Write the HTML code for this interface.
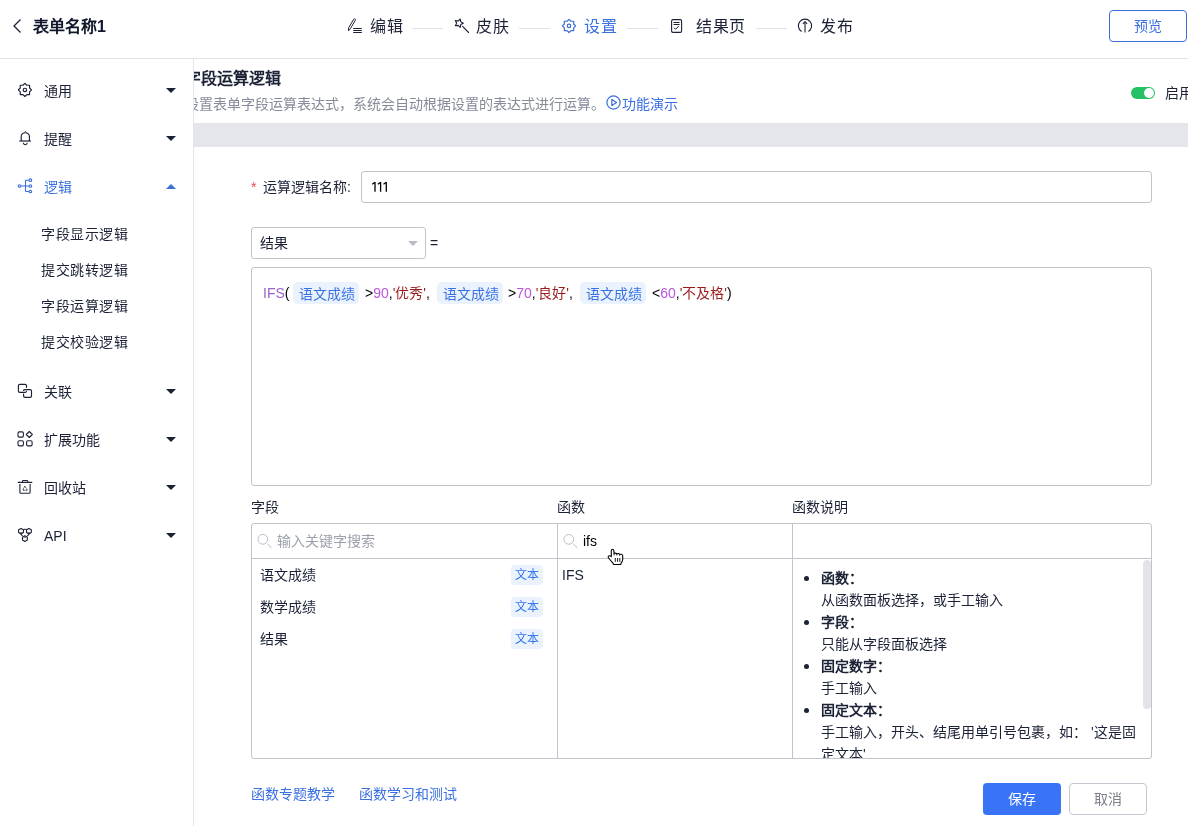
<!DOCTYPE html>
<html lang="zh-CN"><head><meta charset="utf-8">
<style>
*{box-sizing:border-box;margin:0;padding:0}
html,body{width:1188px;height:826px;overflow:hidden;background:#fff;font-family:"Liberation Sans",sans-serif;color:#1b2236}
.a{position:absolute;white-space:nowrap;will-change:transform}
.hdr{position:absolute;left:0;top:0;width:1188px;height:59px;border-bottom:1px solid #e1e2e7;background:#fff}
.t16{font-size:16px;line-height:20px}
.t14{font-size:14px;line-height:18px}
.t13{font-size:13px;line-height:18px}
.blue{color:#3a70e0}
.line{position:absolute;height:1px;background:#dfe2e8;width:31px;top:28px}
.side{position:absolute;left:0;top:59px;width:194px;height:767px;background:#fff;border-right:1px solid #e4e5ea}
.caret{position:absolute;width:0;height:0;border-left:5px solid transparent;border-right:5px solid transparent;border-top:5px solid #1b2236}
.caretup{position:absolute;width:0;height:0;border-left:5px solid transparent;border-right:5px solid transparent;border-bottom:5px solid #3a6fd8}
.box{position:absolute;border:1px solid #c2c3cb;border-radius:3px;background:#fff}
.tag{position:absolute;background:#e9f1fd;color:#3a6fd8;border-radius:4px;font-size:14px;line-height:22px;height:22px;padding:0 6px}
.tg{display:inline-block;background:#e9f1fd;color:#3a6fd8;border-radius:4px;line-height:22px;padding:0 5px;margin:0 1px}
.tgx{position:absolute;will-change:transform;top:282px;height:22px;width:66px;background:#eaf2fe;color:#3a72e2;border-radius:5px;font-size:14px;line-height:22px;padding-left:6px;padding-top:1px}
.tag2{position:absolute;will-change:transform;background:#eaf2fe;color:#3876ec;border-radius:4px;font-size:12px;line-height:20px;height:20px;width:32px;text-align:center}
li{position:relative}
li::before{content:"";position:absolute;left:-17px;top:8.5px;width:5px;height:5px;border-radius:50%;background:#1b2236}
.fx{color:#9a64c8}
.num{color:#bb55dd}
.str{color:#9c1c1c}
</style></head><body>

<!-- header -->
<div class="hdr"></div>
<svg class="a" style="left:12px;top:18px" width="10" height="16" viewBox="0 0 10 16"><path d="M8.5 1.5 L2 8 L8.5 14.5" fill="none" stroke="#1b2236" stroke-width="1.3"/></svg>
<div class="a t16" style="left:33px;top:17px;font-weight:bold;color:#0f172a">表单名称1</div>

<!-- steps -->
<svg class="a" style="left:344px;top:15px" width="22" height="22" viewBox="0 0 22 22"><path d="M4.4 15.8 L4.7 12.7 L9.7 4.2 Q10.4 3.4 11.2 4.0 Q11.8 4.6 11.3 5.3 L6.3 13.8 Z" fill="none" stroke="#1b2236" stroke-width="1" stroke-linejoin="round"/><path d="M9.2 13.5 H17.8 M9.2 15.5 H17.8 M9.2 17.5 H17.8" stroke="#1b2236" stroke-width="1.05"/></svg>
<div class="a t16" style="left:370px;top:17px;letter-spacing:0.5px">编辑</div>
<div class="line" style="left:412px"></div>
<svg class="a" style="left:451px;top:15px" width="22" height="22" viewBox="0 0 22 22"><path d="M9.26 4.02 L9.76 6.85 L12.30 8.20 L9.76 9.55 L9.26 12.38 L7.19 10.39 L4.34 10.79 L5.60 8.20 L4.34 5.61 L7.19 6.01 Z" fill="none" stroke="#1b2236" stroke-width="1.1" stroke-linejoin="round"/><path d="M11.6 11.4 L17.6 17.5" stroke="#1b2236" stroke-width="1.1" stroke-linecap="round"/></svg>
<div class="a t16" style="left:476px;top:17px;letter-spacing:0.5px">皮肤</div>
<div class="line" style="left:519px"></div>
<svg class="a" style="left:558px;top:15px" width="22" height="22" viewBox="0 0 22 22"><path d="M11.00 4.30 L12.93 6.23 L15.67 6.23 L15.67 8.97 L17.60 10.90 L15.67 12.83 L15.67 15.57 L12.93 15.57 L11.00 17.50 L9.07 15.57 L6.33 15.57 L6.33 12.83 L4.40 10.90 L6.33 8.97 L6.33 6.23 L9.07 6.23 Z" fill="none" stroke="#3a6fd8" stroke-width="1.2" stroke-linejoin="round"/><circle cx="11" cy="10.9" r="1.7" fill="none" stroke="#3a6fd8" stroke-width="1.2"/></svg>
<div class="a t16 blue" style="left:584px;top:17px;letter-spacing:0.5px">设置</div>
<div class="line" style="left:627px"></div>
<svg class="a" style="left:666px;top:15px" width="22" height="22" viewBox="0 0 22 22"><rect x="5.6" y="4.6" width="10" height="12.8" rx="1.3" fill="none" stroke="#1b2236" stroke-width="1.1"/><path d="M7.5 7.5 H13.6 M7.5 9.5 H13.6" stroke="#1b2236" stroke-width="1"/><path d="M8.4 13 L9.6 14.3 L12.5 11.3" fill="none" stroke="#1b2236" stroke-width="1" stroke-linecap="round" stroke-linejoin="round"/></svg>
<div class="a t16" style="left:696px;top:17px;letter-spacing:0.5px">结果页</div>
<div class="line" style="left:756px"></div>
<svg class="a" style="left:794px;top:15px" width="22" height="22" viewBox="0 0 22 22"><path d="M7.3 16.2 A6.6 6.6 0 1 1 14.7 16.2" fill="none" stroke="#1b2236" stroke-width="1.1" stroke-linecap="round"/><path d="M11 7 V17.6" stroke="#1b2236" stroke-width="1.1"/><path d="M8.9 8.8 L11 6.6 L13.1 8.8" fill="none" stroke="#1b2236" stroke-width="1.1" stroke-linejoin="round"/></svg>
<div class="a t16" style="left:820px;top:17px;letter-spacing:0.5px">发布</div>

<div class="a" style="left:1109px;top:10px;width:78px;height:32px;border:1px solid #3d6dd6;border-radius:4px;"></div>
<div class="a t14 blue" style="left:1134px;top:17px">预览</div>

<!-- sidebar -->
<div style="position:absolute;left:0;top:0;width:0;height:0;z-index:5">
<div class="side"></div>
<svg class="a" style="left:14px;top:80px" width="22" height="22" viewBox="0 0 22 22"><path d="M10.90 3.30 L12.83 5.23 L15.57 5.23 L15.57 7.97 L17.50 9.90 L15.57 11.83 L15.57 14.57 L12.83 14.57 L10.90 16.50 L8.97 14.57 L6.23 14.57 L6.23 11.83 L4.30 9.90 L6.23 7.97 L6.23 5.23 L8.97 5.23 Z" fill="none" stroke="#1b2236" stroke-width="1.15" stroke-linejoin="round"/><circle cx="10.9" cy="9.9" r="1.7" fill="none" stroke="#1b2236" stroke-width="1.15"/></svg>
<div class="a t14" style="left:44px;top:82px">通用</div>
<div class="caret" style="left:166px;top:88px"></div>
<svg class="a" style="left:14px;top:128px" width="22" height="22" viewBox="0 0 22 22"><path d="M7.2 12.9 V8 A4.2 4.2 0 0 1 15.4 8 V12.9" fill="none" stroke="#1b2236" stroke-width="1.15"/><path d="M11.3 3.3 V3.9" stroke="#1b2236" stroke-width="1.1"/><path d="M5.3 13 H16.9" stroke="#1b2236" stroke-width="1.2"/><path d="M9.4 14.8 A1.9 1.9 0 0 0 13.2 14.8" fill="none" stroke="#1b2236" stroke-width="1.1"/></svg>
<div class="a t14" style="left:44px;top:130px">提醒</div>
<div class="caret" style="left:166px;top:136px"></div>
<svg class="a" style="left:14px;top:176px" width="22" height="22" viewBox="0 0 22 22"><path d="M6.7 10 H15.2 M11.5 4.2 V15.5 M11.5 4.2 H15.2 M11.5 15.5 H15.2" fill="none" stroke="#3a6fd8" stroke-width="1.1"/><circle cx="5.5" cy="10" r="1.3" fill="#fff" stroke="#3a6fd8" stroke-width="1.1"/><circle cx="16.4" cy="4.2" r="1.3" fill="#fff" stroke="#3a6fd8" stroke-width="1.1"/><circle cx="16.4" cy="10" r="1.3" fill="#fff" stroke="#3a6fd8" stroke-width="1.1"/><circle cx="16.4" cy="15.5" r="1.3" fill="#fff" stroke="#3a6fd8" stroke-width="1.1"/></svg>
<div class="a t14 blue" style="left:44px;top:178px">逻辑</div>
<div class="caretup" style="left:166px;top:184px"></div>
<div class="a t14" style="left:41px;top:225px;letter-spacing:0.5px">字段显示逻辑</div>
<div class="a t14" style="left:41px;top:261px;letter-spacing:0.5px">提交跳转逻辑</div>
<div class="a t14" style="left:41px;top:297px;letter-spacing:0.5px">字段运算逻辑</div>
<div class="a t14" style="left:41px;top:333px;letter-spacing:0.5px">提交校验逻辑</div>
<svg class="a" style="left:14px;top:380px" width="22" height="22" viewBox="0 0 22 22"><path d="M12.5 7.3 V5.8 Q12.5 4.4 11.1 4.4 H5.8 Q4.4 4.4 4.4 5.8 V11 Q4.4 12.4 5.8 12.4 H11.1 Q12.5 12.4 12.5 11.3" fill="none" stroke="#1b2236" stroke-width="1.15" stroke-linecap="round"/><path d="M9.6 10.4 Q9.6 9.6 11 9.6 H16.1 Q17.5 9.6 17.5 11 V16 Q17.5 17.4 16.1 17.4 H11 Q9.6 17.4 9.6 16 V14" fill="none" stroke="#1b2236" stroke-width="1.15" stroke-linecap="round"/></svg>
<div class="a t14" style="left:44px;top:383px">关联</div>
<div class="caret" style="left:166px;top:389px"></div>
<svg class="a" style="left:14px;top:428px" width="22" height="22" viewBox="0 0 22 22"><rect x="4.0" y="3.9" width="5.4" height="5.2" rx="1.3" fill="none" stroke="#1b2236" stroke-width="1.1"/><rect x="4.0" y="12.7" width="5.4" height="5.2" rx="1.3" fill="none" stroke="#1b2236" stroke-width="1.1"/><rect x="12.6" y="12.7" width="5.5" height="5.2" rx="1.3" fill="none" stroke="#1b2236" stroke-width="1.1"/><path d="M15.3 3.5 L18.3 6.5 L15.3 9.5 L12.3 6.5 Z" fill="none" stroke="#1b2236" stroke-width="1.1" stroke-linejoin="round"/></svg>
<div class="a t14" style="left:44px;top:431px">扩展功能</div>
<div class="caret" style="left:166px;top:437px"></div>
<svg class="a" style="left:14px;top:476px" width="22" height="22" viewBox="0 0 22 22"><path d="M4.2 6.4 H17.8" stroke="#1b2236" stroke-width="1.1" stroke-linecap="round"/><path d="M8.5 6.4 V4.5 H13.7 V6.4" fill="none" stroke="#1b2236" stroke-width="1"/><path d="M5.9 8 V16.2 Q5.9 17.3 7 17.3 H15 Q16.1 17.3 16.1 16.2 V8" fill="none" stroke="#1b2236" stroke-width="1.1"/><path d="M10.8 10.2 L8.6 14.2 H13.6 Z" fill="none" stroke="#1b2236" stroke-width="1" stroke-dasharray="1.6 0.9"/></svg>
<div class="a t14" style="left:44px;top:479px">回收站</div>
<div class="caret" style="left:166px;top:485px"></div>
<svg class="a" style="left:14px;top:524px" width="22" height="22" viewBox="0 0 22 22"><path d="M7.00 4.40 L9.42 5.80 L9.42 8.60 L7.00 10.00 L4.58 8.60 L4.58 5.80 Z" fill="none" stroke="#1b2236" stroke-width="1.1" stroke-linejoin="round"/><path d="M14.90 4.40 L17.32 5.80 L17.32 8.60 L14.90 10.00 L12.48 8.60 L12.48 5.80 Z" fill="none" stroke="#1b2236" stroke-width="1.1" stroke-linejoin="round"/><path d="M10.90 11.80 L13.32 13.20 L13.32 16.00 L10.90 17.40 L8.48 16.00 L8.48 13.20 Z" fill="none" stroke="#1b2236" stroke-width="1.1" stroke-linejoin="round"/><path d="M9.4 5.6 Q11 5.0 12.5 5.6 M6.8 10 L8.5 12.2 M15 10 L13.3 12.2" fill="none" stroke="#1b2236" stroke-width="1.1"/><path d="M6 8.2 A1.3 1.3 0 0 0 8.2 8.2 M13.7 8.2 A1.3 1.3 0 0 0 15.9 8.2 M9.8 13.8 A1.3 1.3 0 0 1 12 13.8" fill="none" stroke="#1b2236" stroke-width="0.9"/></svg>
<div class="a t14" style="left:44px;top:527px">API</div>
<div class="caret" style="left:166px;top:533px"></div>
</div>

<!-- main -->
<div class="a" style="left:185px;top:69px;font-size:16px;line-height:20px;font-weight:bold">字段运算逻辑</div>
<div class="a t14" style="left:185px;top:95px;color:#858b98">设置表单字段运算表达式，系统会自动根据设置的表达式进行运算。</div>
<svg class="a" style="left:606px;top:95px" width="15" height="15" viewBox="0 0 15 15"><circle cx="7.5" cy="7.5" r="6.6" fill="none" stroke="#3a6fd8" stroke-width="1.2"/><path d="M5.8 4.5 L10.5 7.5 L5.8 10.5 Z" fill="none" stroke="#3a6fd8" stroke-width="1.2" stroke-linejoin="round"/></svg>
<div class="a t14 blue" style="left:622px;top:95px">功能演示</div>
<div class="a" style="left:1131px;top:87px;width:24px;height:12px;border-radius:6px;background:#23c163"></div>
<div class="a" style="left:1144px;top:88px;width:10px;height:10px;border-radius:5px;background:#fff"></div>
<div class="a t14" style="left:1165px;top:84px">启用</div>
<div class="a" style="left:194px;top:123px;width:994px;height:24px;background:#e5e6eb"></div>

<!-- form -->
<div class="a t14" style="left:251px;top:178px;color:#e5484d">*</div>
<div class="a t14" style="left:263px;top:178px">运算逻辑名称:</div>
<div class="box" style="left:361px;top:171px;width:791px;height:32px"></div>
<svg class="a" style="left:0;top:0" width="400" height="200" viewBox="0 0 400 200"><path d="M375.0 182 V191.8 M375.0 182.3 L372.2 184.2" fill="none" stroke="#000" stroke-width="1.3"/><path d="M380.6 182 V191.8 M380.6 182.3 L377.8 184.2" fill="none" stroke="#000" stroke-width="1.3"/><path d="M386.3 182 V191.8 M386.3 182.3 L383.5 184.2" fill="none" stroke="#000" stroke-width="1.3"/></svg>

<div class="box" style="left:251px;top:227px;width:175px;height:32px"></div>
<div class="a t14" style="left:260px;top:234px">结果</div>
<div class="a" style="left:408px;top:241px;width:0;height:0;border-left:5px solid transparent;border-right:5px solid transparent;border-top:5px solid #b8bcc6"></div>
<div class="a t14" style="left:430px;top:234px">=</div>

<div class="box" style="left:251px;top:267px;width:901px;height:219px"></div>
<div class="a t14" style="left:263px;top:284px;color:#000"><span class="fx">IFS</span>(</div>
<div class="tgx" style="left:293px">语文成绩</div>
<div class="a t14" style="left:365px;top:284px;color:#000">&gt;<span class="num">90</span>,<span class="str">'优秀'</span>,</div>
<div class="tgx" style="left:437px">语文成绩</div>
<div class="a t14" style="left:508px;top:284px;color:#000">&gt;<span class="num">70</span>,<span class="str">'良好'</span>,</div>
<div class="tgx" style="left:580px">语文成绩</div>
<div class="a t14" style="left:652px;top:284px;color:#000">&lt;<span class="num">60</span>,<span class="str">'不及格'</span>)</div>

<!-- panel -->
<div class="a t14" style="left:251px;top:498px">字段</div>
<div class="a t14" style="left:557px;top:498px">函数</div>
<div class="a t14" style="left:792px;top:498px">函数说明</div>
<div class="box" style="left:251px;top:523px;width:901px;height:236px"></div>
<div class="a" style="left:252px;top:558px;width:899px;height:1px;background:#c2c3cb"></div>
<div class="a" style="left:557px;top:524px;width:1px;height:234px;background:#c2c3cb"></div>
<div class="a" style="left:792px;top:524px;width:1px;height:234px;background:#c2c3cb"></div>

<svg class="a" style="left:257px;top:534px" width="16" height="16" viewBox="0 0 16 16"><circle cx="5.8" cy="5.3" r="4.9" fill="none" stroke="#b9bdc6" stroke-width="1"/><path d="M10.5 10.1 L14.2 13.6" stroke="#b9bdc6" stroke-width="1" stroke-linecap="round"/></svg>
<div class="a t14" style="left:277px;top:532px;color:#9ca1ab">输入关键字搜索</div>
<svg class="a" style="left:563px;top:534px" width="16" height="16" viewBox="0 0 16 16"><circle cx="5.8" cy="5.3" r="4.9" fill="none" stroke="#b9bdc6" stroke-width="1"/><path d="M10.5 10.1 L14.2 13.6" stroke="#b9bdc6" stroke-width="1" stroke-linecap="round"/></svg>
<div class="a t14" style="left:583px;top:532px;color:#000">ifs</div>

<div class="a t14" style="left:260px;top:566px">语文成绩</div>
<div class="a t14" style="left:260px;top:598px">数学成绩</div>
<div class="a t14" style="left:260px;top:630px">结果</div>
<div class="tag2" style="left:511px;top:565px">文本</div>
<div class="tag2" style="left:511px;top:597px">文本</div>
<div class="tag2" style="left:511px;top:629px">文本</div>
<div class="a t14" style="left:562px;top:566px">IFS</div>
<svg class="a" style="left:600px;top:542px;z-index:3" width="32" height="30" viewBox="0 0 32 30"><path d="M11.3 14.6 L11.3 8.4 Q11.3 7.2 12.5 7.2 Q13.7 7.2 13.8 8.4 L14.1 11.6 Q14.3 11.0 15.3 11.1 Q16.5 11.2 16.8 12.0 Q17.2 11.4 18.3 11.5 Q19.4 11.7 19.6 12.5 Q20.0 12.1 21.2 12.2 Q22.7 12.4 22.7 13.8 L22.7 17.5 Q22.5 19.5 21.0 21.3 L20.7 22.5 L13.6 22.5 L13.0 21.2 Q10.5 18.5 8.6 16.0 Q7.7 14.6 8.8 13.9 Q9.9 13.3 11.3 14.6 Z" fill="#fff" stroke="#000" stroke-width="1.1" stroke-linejoin="round"/><path d="M15.3 16 V19.8 M17.6 16 V19.8 M19.8 16 V19.8" stroke="#000" stroke-width="0.9"/><path d="M14.1 11.8 V13.4 M16.8 12.1 V13.4 M19.6 12.5 V13.6" stroke="#000" stroke-width="0.9"/></svg>


<div class="a" style="left:793px;top:559px;width:358px;height:199px;overflow:hidden">
<ul style="position:absolute;left:28px;top:8px;font-size:14px;line-height:22px;width:330px;white-space:normal;list-style:none">
<li><b>函数：</b><br>从函数面板选择，或手工输入</li>
<li><b>字段：</b><br>只能从字段面板选择</li>
<li><b>固定数字：</b><br>手工输入</li>
<li><b>固定文本：</b><br>手工输入，开头、结尾用单引号包裹，如： '这是固<br>定文本'</li>
</ul>
</div>
<div class="a" style="left:1143px;top:560px;width:8px;height:149px;border-radius:4px;background:#e3e4e8"></div>

<!-- footer -->
<div class="a t14 blue" style="left:251px;top:785px">函数专题教学</div>
<div class="a t14 blue" style="left:359px;top:785px">函数学习和测试</div>
<div class="a" style="left:983px;top:783px;width:78px;height:32px;border-radius:4px;background:#3a74f6"></div>
<div class="a t14" style="left:1008px;top:790px;color:#fff">保存</div>
<div class="a" style="left:1069px;top:783px;width:78px;height:32px;border-radius:4px;border:1px solid #c4c7cf;background:#fff"></div>
<div class="a t14" style="left:1094px;top:790px;color:#7d818a">取消</div>

</body></html>
